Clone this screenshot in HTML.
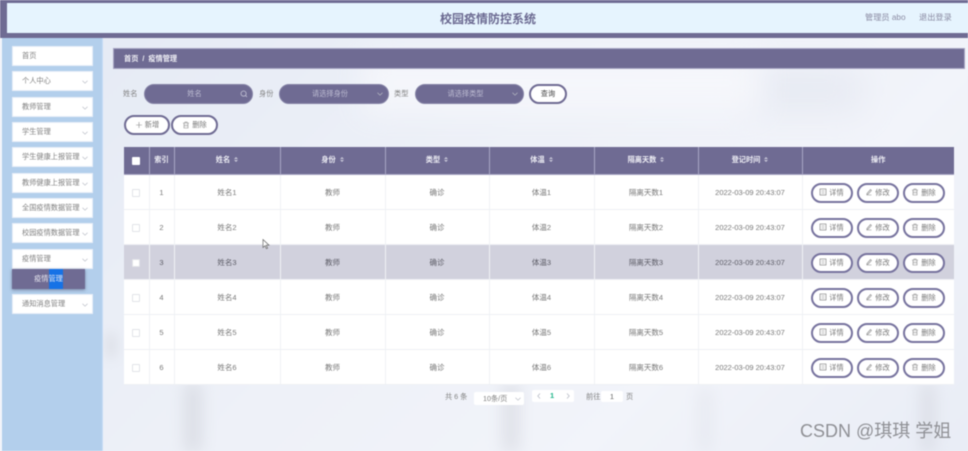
<!DOCTYPE html>
<html lang="zh"><head><meta charset="utf-8"><title>校园疫情防控系统</title>
<style>
*{box-sizing:border-box;margin:0;padding:0}
html,body{width:968px;height:451px;overflow:hidden;background:#eef1f8}
#w{position:absolute;left:0;top:0;width:968px;height:451px;overflow:hidden;filter:blur(.4px);font-family:"Liberation Sans","Noto Sans CJK SC",sans-serif;font-size:7.5px;color:#666}
.a{position:absolute}
.t{position:absolute;white-space:nowrap;line-height:12px}
#left{left:0;top:0;width:3px;height:451px;background:#f4f6fb}
#bg{left:103px;top:38px;width:865px;height:413px;overflow:hidden;background:linear-gradient(135deg,#e6ebf5 0%,#eef1f8 40%,#f2f4fa 70%,#e9edf6 100%)}
#bg i{position:absolute;display:block;filter:blur(6px)}
#hd{left:0;top:0;width:968px;height:38px;background:#6f6b93}
#hd div.in{position:absolute;left:7px;top:3px;width:961px;height:30px;background:#e6f4fe}
#side{left:2px;top:38px;width:101px;height:413px;background:#b3cfec;border-right:1px solid #c6dcf6}
.m{position:absolute;left:12px;width:81px;height:20px;background:#fff;border:1px solid #e8eef8;color:#808080;font-size:7.2px;line-height:18px;padding-left:9px;white-space:nowrap}
.m svg{position:absolute;right:3px;top:6px}
#sub{left:12px;top:269px;width:73px;height:20px;background:#6f6b93;box-shadow:0 1px 3px rgba(60,60,90,.5);color:#e8e8f0;font-size:7.2px;line-height:20px;text-align:center}
#sub b{position:absolute;left:37px;top:0;width:14px;height:20px;background:#1672e6}
#sub span{position:relative}
#bc{left:113px;top:48px;width:852px;height:21px;background:#6f6b93;border:1px solid #a6a4c2;color:#f0f0f6;font-size:7.2px;font-weight:bold;line-height:19px;padding-left:10px}
.pill{position:absolute;height:20px;border-radius:10px;background:#6f6b93;border:1px solid #8583a6;color:#bdbcd2;font-size:7.2px;line-height:18px;text-align:center;padding-right:8px}
.btn{position:absolute;height:20px;border-radius:10px;background:#fff;border:2px solid #6f6b93;color:#777;font-size:7.2px;line-height:16px;text-align:center;white-space:nowrap}
.btn svg{vertical-align:-1.5px;margin-right:2px}
table{position:absolute;left:124px;top:147px;width:830px;height:237px;border-collapse:collapse;table-layout:fixed;background:#fff}
th{height:27px;background:#6f6b93;color:#eeeef5;font-size:7.2px;font-weight:bold;border-right:1px solid #a8a6c4;border-bottom:1px solid #a8a6c4;text-align:center;padding:0}
td{height:35px;font-size:7.5px;color:#777;border-right:1px solid #f0f1f5;border-bottom:1px solid #eef0f4;text-align:center;padding:1px 0 0;position:relative;white-space:nowrap}
tr.h td{background:#d1d1dd;color:#5c5c66}
th:last-child,td:last-child{border-right:0}
.cb{display:inline-block;width:8px;height:8px;border:1px solid #e2e3e8;background:#fff;border-radius:1px;vertical-align:middle}
th .cb{background:#fff;border-color:#fff}
.s{display:inline-block;margin-left:4px;line-height:3px;vertical-align:0;width:4px}
.s:before{content:"";display:block;width:0;height:0;border:2px solid transparent;border-bottom:2px solid #c9c8da;border-top:0;margin-bottom:1px}
.s:after{content:"";display:block;width:0;height:0;border:2px solid transparent;border-top:2px solid #c9c8da;border-bottom:0}
.r{position:absolute;width:42px;height:20px;top:8px;border-radius:10px;background:#fff;border:2px solid #77739e;font-size:7.2px;line-height:16px;color:#777;text-align:center}
.r svg{vertical-align:-1.5px;margin-right:2px}
.r1{left:8px}.r2{left:54px}.r3{left:100px}
</style></head><body>
<div id="w">
<svg width="0" height="0" style="position:absolute">
<symbol id="d" viewBox="0 0 8 8"><rect x="1" y="1" width="6" height="6" fill="none" stroke="#888" stroke-width=".7"/><path d="M2.500 3h3M2.500 5h3" stroke="#888" stroke-width=".5"/></symbol>
<symbol id="e" viewBox="0 0 8 8"><path d="M1.500 7h5M2 5.500L5.500 1.500l1 1L3 6.200l-1.200.2z" fill="none" stroke="#888" stroke-width=".6"/></symbol>
<symbol id="x" viewBox="0 0 8 8"><path d="M1 2h6M3 2V1h2v1M2 2v5h4V2M3.200 3.500v2M4.800 3.500v2" fill="none" stroke="#888" stroke-width=".6"/></symbol>
<symbol id="c" viewBox="0 0 8 8"><path d="M1.500 2.800L4 5.200l2.500-2.400" fill="none" stroke="#b9bcc6" stroke-width=".7"/></symbol>
</svg>

<div id="left" class="a"></div>
<div id="bg" class="a">
<i style="left:3px;top:295px;width:10px;height:25px;background:#c9cbd2;opacity:.45"></i>
<i style="left:82px;top:345px;width:16px;height:70px;background:#c6c8d0;opacity:.5;filter:blur(8px)"></i>
<i style="left:400px;top:345px;width:16px;height:70px;background:#c6c8d0;opacity:.45;filter:blur(8px)"></i>
<i style="left:595px;top:350px;width:14px;height:65px;background:#d0d2da;opacity:.28;filter:blur(8px)"></i>
<i style="left:818px;top:345px;width:14px;height:70px;background:#c8cad2;opacity:.45;filter:blur(8px)"></i>
<i style="left:640px;top:30px;width:120px;height:45px;background:#dde1ec;opacity:.45;filter:blur(16px)"></i>
<i style="left:260px;top:15px;width:400px;height:60px;background:#f7f8fc;opacity:.8;filter:blur(14px)"></i>
</div>

<div id="hd" class="a"><div class="in"></div></div>
<div class="t" style="left:440px;top:12px;font-size:12px;font-weight:bold;color:#6a6890;line-height:14px">校园疫情防控系统</div>
<div class="t" style="left:865px;top:12px;font-size:8.2px;color:#8a8aa2">管理员 abo</div>
<div class="t" style="left:919px;top:12px;font-size:8.2px;color:#8a8aa2">退出登录</div>

<div id="side" class="a"></div>
<div class="m" style="top:46px">首页</div>
<div class="m" style="top:71px">个人中心<svg width="8" height="8"><use href="#c"/></svg></div>
<div class="m" style="top:97px">教师管理<svg width="8" height="8"><use href="#c"/></svg></div>
<div class="m" style="top:122px">学生管理<svg width="8" height="8"><use href="#c"/></svg></div>
<div class="m" style="top:147px">学生健康上报管理<svg width="8" height="8"><use href="#c"/></svg></div>
<div class="m" style="top:173px">教师健康上报管理<svg width="8" height="8"><use href="#c"/></svg></div>
<div class="m" style="top:198px">全国疫情数据管理<svg width="8" height="8"><use href="#c"/></svg></div>
<div class="m" style="top:223px">校园疫情数据管理<svg width="8" height="8"><use href="#c"/></svg></div>
<div class="m" style="top:249px">疫情管理<svg width="8" height="8"><use href="#c"/></svg></div>
<div id="sub" class="a"><b></b><span>疫情管理</span></div>
<div class="m" style="top:294px">通知消息管理<svg width="8" height="8"><use href="#c"/></svg></div>

<div id="bc" class="a">首页&nbsp; /&nbsp; 疫情管理</div>

<div class="t" style="left:123px;top:88px;font-size:7.2px;color:#808080">姓名</div>
<div class="pill" style="left:144px;top:84px;width:109px">姓名<svg class="a" style="right:4px;top:5px" width="8" height="8" viewBox="0 0 8 8"><circle cx="3.600" cy="3.600" r="2.600" fill="none" stroke="#c4c3d6" stroke-width=".8"/><path d="M5.600 5.600L7 7" stroke="#c4c3d6" stroke-width=".8"/></svg></div>
<div class="t" style="left:259px;top:88px;font-size:7.2px;color:#808080">身份</div>
<div class="pill" style="left:279px;top:84px;width:110px">请选择身份<svg class="a" style="right:4px;top:5px" width="8" height="8"><use href="#c"/></svg></div>
<div class="t" style="left:394px;top:88px;font-size:7.2px;color:#808080">类型</div>
<div class="pill" style="left:415px;top:84px;width:109px">请选择类型<svg class="a" style="right:4px;top:5px" width="8" height="8"><use href="#c"/></svg></div>
<div class="btn" style="left:529px;top:84px;width:38px;color:#444">查询</div>
<div class="btn" style="left:124px;top:115px;width:46px"><svg width="8" height="8" viewBox="0 0 8 8"><path d="M4 1v6M1 4h6" stroke="#888" stroke-width=".6"/></svg>新增</div>
<div class="btn" style="left:171px;top:115px;width:47px"><svg width="8" height="8"><use href="#x"/></svg>删除</div>

<table>
<colgroup><col style="width:25px"><col style="width:25px"><col style="width:106px"><col style="width:105px"><col style="width:104px"><col style="width:105px"><col style="width:104px"><col style="width:104px"><col style="width:152px"></colgroup>
<tr><th><span class="cb"></span></th><th>索引</th><th>姓名<span class="s"></span></th><th>身份<span class="s"></span></th><th>类型<span class="s"></span></th><th>体温<span class="s"></span></th><th>隔离天数<span class="s"></span></th><th>登记时间<span class="s"></span></th><th>操作</th></tr>
<tr><td><span class="cb"></span></td><td>1</td><td>姓名1</td><td>教师</td><td>确诊</td><td>体温1</td><td>隔离天数1</td><td>2022-03-09 20:43:07</td><td><div class="r r1"><svg width="8" height="8"><use href="#d"/></svg>详情</div><div class="r r2"><svg width="8" height="8"><use href="#e"/></svg>修改</div><div class="r r3"><svg width="8" height="8"><use href="#x"/></svg>删除</div></td></tr>
<tr><td><span class="cb"></span></td><td>2</td><td>姓名2</td><td>教师</td><td>确诊</td><td>体温2</td><td>隔离天数2</td><td>2022-03-09 20:43:07</td><td><div class="r r1"><svg width="8" height="8"><use href="#d"/></svg>详情</div><div class="r r2"><svg width="8" height="8"><use href="#e"/></svg>修改</div><div class="r r3"><svg width="8" height="8"><use href="#x"/></svg>删除</div></td></tr>
<tr class="h"><td><span class="cb"></span></td><td>3</td><td>姓名3</td><td>教师</td><td>确诊</td><td>体温3</td><td>隔离天数3</td><td>2022-03-09 20:43:07</td><td><div class="r r1"><svg width="8" height="8"><use href="#d"/></svg>详情</div><div class="r r2"><svg width="8" height="8"><use href="#e"/></svg>修改</div><div class="r r3"><svg width="8" height="8"><use href="#x"/></svg>删除</div></td></tr>
<tr><td><span class="cb"></span></td><td>4</td><td>姓名4</td><td>教师</td><td>确诊</td><td>体温4</td><td>隔离天数4</td><td>2022-03-09 20:43:07</td><td><div class="r r1"><svg width="8" height="8"><use href="#d"/></svg>详情</div><div class="r r2"><svg width="8" height="8"><use href="#e"/></svg>修改</div><div class="r r3"><svg width="8" height="8"><use href="#x"/></svg>删除</div></td></tr>
<tr><td><span class="cb"></span></td><td>5</td><td>姓名5</td><td>教师</td><td>确诊</td><td>体温5</td><td>隔离天数5</td><td>2022-03-09 20:43:07</td><td><div class="r r1"><svg width="8" height="8"><use href="#d"/></svg>详情</div><div class="r r2"><svg width="8" height="8"><use href="#e"/></svg>修改</div><div class="r r3"><svg width="8" height="8"><use href="#x"/></svg>删除</div></td></tr>
<tr><td><span class="cb"></span></td><td>6</td><td>姓名6</td><td>教师</td><td>确诊</td><td>体温6</td><td>隔离天数6</td><td>2022-03-09 20:43:07</td><td><div class="r r1"><svg width="8" height="8"><use href="#d"/></svg>详情</div><div class="r r2"><svg width="8" height="8"><use href="#e"/></svg>修改</div><div class="r r3"><svg width="8" height="8"><use href="#x"/></svg>删除</div></td></tr>
</table>

<svg class="a" style="left:262px;top:239px" width="9" height="11" viewBox="0 0 9 11"><path d="M1 .5v8l2-1.800 1.400 3 1.200-.5-1.400-3H7z" fill="#fff" stroke="#666" stroke-width=".7"/></svg>

<div class="t" style="left:445px;top:391px;font-size:7.2px;color:#808080">共 6 条</div>
<div class="a" style="left:474px;top:392px;width:50px;height:13px;background:#fff;border-radius:2px;font-size:7.2px;line-height:13px;padding-left:9px;color:#808080">10条/页<svg class="a" style="right:2px;top:3px" width="8" height="8"><use href="#c"/></svg></div>
<div class="a" style="left:532px;top:390px;width:42px;height:12px;background:#fff;border-radius:2px"></div>
<svg class="a" style="left:535px;top:392px" width="8" height="8" viewBox="0 0 8 8"><path d="M5 1.500L2.800 4 5 6.500" fill="none" stroke="#b9bcc6" stroke-width=".8"/></svg>
<div class="t" style="left:550px;top:390px;font-size:7.5px;font-weight:bold;color:#1fb58a">1</div>
<svg class="a" style="left:564px;top:392px" width="8" height="8" viewBox="0 0 8 8"><path d="M3 1.500L5.200 4 3 6.500" fill="none" stroke="#b9bcc6" stroke-width=".8"/></svg>
<div class="t" style="left:586px;top:391px;font-size:7.2px;color:#808080">前往</div>
<div class="a" style="left:601px;top:391px;width:22px;height:11px;background:#fff;border-radius:2px;font-size:7.5px;line-height:11px;text-align:center;color:#666">1</div>
<div class="t" style="left:626px;top:391px;font-size:7.2px;color:#808080">页</div>

<div class="t" style="left:800px;top:421px;font-size:18px;line-height:20px;color:#8f9095">CSDN @琪琪 学姐</div>
</div>
</body></html>
